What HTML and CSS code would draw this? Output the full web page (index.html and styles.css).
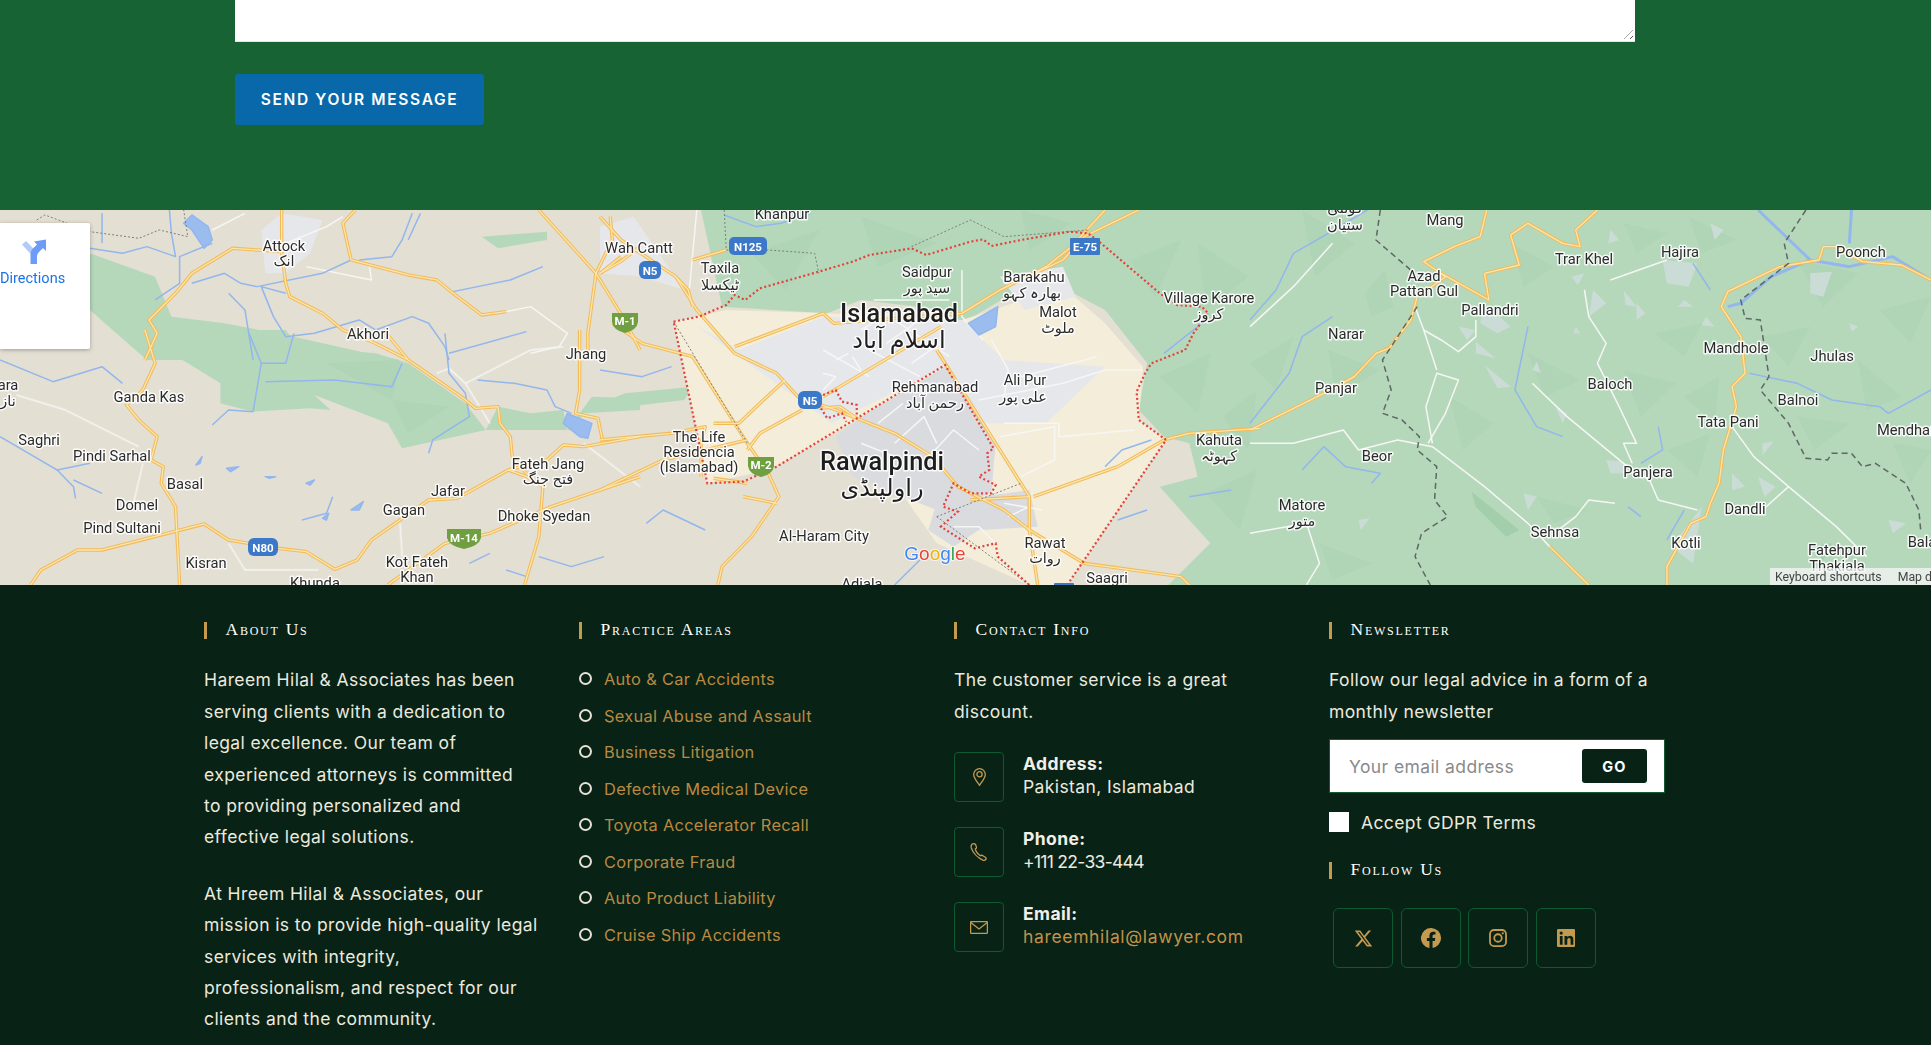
FILE: index.html
```html
<!DOCTYPE html>
<html lang="en">
<head>
<meta charset="utf-8">
<title>Contact</title>
<link rel="stylesheet" href="styles.css">
</head>
<body>
<section class="contact">
  <div class="textarea"><span class="grip"></span></div>
  <button class="send">SEND YOUR MESSAGE</button>
</section>

<section class="map">
  <svg class="map-svg" viewBox="0 210 1931 375" width="1931" height="375" xmlns="http://www.w3.org/2000/svg">
    <defs>
      <g id="roads">
        <g transform="translate(0,0) scale(.4082,.3333)">
          <path d="M355 1080L385 1000L365 960L430 880L470 820L570 745L690 755L700 850L710 890L790 940L840 990L920 1030L1000 1080"/>
          <path d="M690 630L690 755"/>
          <path d="M870 630L840 670L860 780L1000 825L1070 840L1110 880L1180 945L1240 935"/>
          <path d="M1320 630L1460 820L1530 960L1568 1050"/>
          <path d="M1495 650L1500 720L1460 820L1440 1000L1440 1080"/>
          <path d="M1568 740L1520 785L1470 820"/>
        </g>
        <g transform="translate(0,330) scale(.4082,.3333)">
          <path d="M355 0L380 100L350 180L310 225L340 270L385 320L370 390L400 410L395 460L430 530L440 765"/>
          <path d="M75 765L100 720L190 660L250 660L500 582L560 630L680 655L750 665L820 718L875 690L910 630L1050 510L1120 505L1245 420L1290 440L1330 470"/>
          <path d="M940 0L1000 90L1130 200L1165 235L1220 230L1225 280L1250 320L1255 380L1290 430"/>
          <path d="M1420 0L1420 180L1410 250L1465 265L1475 325"/>
          <path d="M1245 420L1340 390L1380 345L1430 350L1568 320"/>
          <path d="M1330 470L1320 620L1285 765"/>
          <path d="M950 765L1090 640L1200 610L1350 530L1568 440"/>
        </g>
        <g transform="translate(600,210) scale(.4209,.3333)">
          <path d="M0 20L50 90L180 200L230 300L320 430L420 490L470 560L560 600L700 670L790 740L850 830L960 900L1020 960L1150 1060L1380 1100L1400 1125"/>
          <path d="M30 340L100 400L220 440L350 700L400 790L425 860L360 980L290 1070L280 1125"/>
          <path d="M800 420L1020 860L1020 960L1040 1125"/>
          <path d="M320 410L530 310L555 340L860 310L950 240L1100 150L1150 80L1280 0"/>
          <path d="M530 560L810 350"/>
          <path d="M0 690L170 670L250 650L240 700L240 800"/>
          <path d="M0 840L150 750L350 690"/>
          <path d="M440 510L380 580L330 640L270 640"/>
          <path d="M480 600L380 670L350 720"/>
          <path d="M1030 860L1230 770L1340 690L1400 670L1568 655"/>
          <path d="M880 870L1020 860"/>
          <path d="M220 290L210 240L180 200M300 120L220 150M0 190L50 140"/>
          <path d="M520 595L570 590L610 625"/>
          <path d="M1200 0L1120 110L1060 170L950 240"/>
          <path d="M340 860L420 880"/>
          <path d="M270 805L350 820"/>
        </g>
        <g transform="translate(1250,210) scale(.4343,.3333)">
          <path d="M0 660L170 550L240 500L290 430L320 415L370 330L385 260L450 200L400 155L470 110L530 80L545 0"/>
          <path d="M440 190L550 270L540 190L620 165L600 75L640 40L720 100L760 110L750 60L800 0"/>
          <path d="M1568 210L1500 165L1410 155L1350 110L1320 110L1310 150L1220 170L1100 245L1085 290L1130 380L1140 490L1110 530L1120 590L1090 720L1080 820L1060 880L1050 920L1015 940L960 1070L960 1125"/>
          <path d="M690 1010L780 1125"/>
        </g>
      </g>
    </defs>

    <rect x="0" y="210" width="1931" height="375" class="land"/>

    <g class="forest">
      <g transform="translate(0,0) scale(.4082,.3333)">
        <path d="M220 760L380 830L420 950L550 970L720 1010L900 1060L980 1080L360 1080L285 1000L220 930Z"/>
        <path d="M1180 710L1340 695L1340 720L1220 745Z"/>
      </g>
      <g transform="translate(0,330) scale(.4082,.3333)">
        <path d="M285 0L380 40L540 160L540 220L620 245L760 235L810 240L770 195L950 280L985 355L1190 300L1220 230L1300 250L1380 240L1390 300L1450 200L1568 205L1568 240L1430 250L1400 300L1190 300L1140 220L1000 100L920 70L730 50L700 0Z"/>
      </g>
      <g transform="translate(600,210) scale(.4209,.3333)">
        <path d="M240 0L290 290L540 310L620 270L820 300L860 350L900 310L1050 200L1200 300L1300 460L1280 600L1340 680L1400 700L1420 800L1330 830L1400 930L1450 1000L1350 1125L1568 1125L1568 0Z"/>
        <path d="M0 580L0 600L200 570L220 530L60 550Z"/>
      </g>
      <rect x="1240" y="210" width="691" height="375"/>
    </g>

    <g class="shade">
      <g transform="translate(600,210) scale(.4209,.3333)">
        <path d="M360 130L520 60L440 240Z"/><path d="M620 20L800 100L660 170Z"/><path d="M1000 0L1120 40L1020 120Z"/>
        <path d="M1260 150L1380 90L1320 260Z"/><path d="M1420 100L1540 200L1440 300Z"/><path d="M1330 500L1450 430L1420 610Z"/>
        <path d="M1480 620L1560 540L1540 720Z"/><path d="M1440 850L1560 780L1520 960Z"/>
      </g>
      <g transform="translate(0,330) scale(.4082,.3333)">
        <path d="M800 100L980 90L960 210Z"/><path d="M960 210L1100 230L1000 310Z"/>
      </g>
      <g transform="translate(1250,210) scale(.4343,.3333)">
        <path d="M265 250L310 180L330 290L280 320Z"/><path d="M930 370L1040 340L1000 440Z"/><path d="M1260 150L1400 190L1320 290Z"/>
        <path d="M510 845L620 960L590 980L520 890Z" class="deep"/><path d="M1290 1010L1340 1000L1320 1050Z" class="deep"/>
        <path d="M120 0L240 100L150 200Z"/><path d="M640 430L760 510L680 560Z"/><path d="M1400 450L1500 560L1420 600Z"/>
        <path d="M0 460L100 380L60 540Z"/><path d="M180 420L300 480L200 560Z"/><path d="M460 560L560 640L490 720Z"/>
        <path d="M600 100L700 170L630 230Z"/><path d="M860 40L960 70L890 130Z"/><path d="M1010 20L1120 90L1040 130Z"/>
        <path d="M1180 380L1290 350L1240 470Z"/><path d="M860 480L980 520L900 620Z"/><path d="M1000 560L1080 500L1070 640Z"/>
        <path d="M960 720L1060 670L1030 800Z"/><path d="M1260 620L1380 640L1300 720Z"/><path d="M1450 300L1568 260L1520 400Z"/>
        <path d="M1480 700L1568 720L1520 820Z"/><path d="M160 1000L280 1060L190 1110Z"/><path d="M660 860L780 900L700 940Z"/>
      </g>
    </g>

    <g class="urban-warm" transform="translate(600,210) scale(.4209,.3333)">
      <path d="M175 335L300 300L540 310L860 330L1100 230L1200 340L1290 470L1280 630L1345 690L1110 1125L1020 1125L800 1000L600 640L400 780L255 820Z"/>
    </g>
    <g class="urban-light" transform="translate(600,210) scale(.4209,.3333)">
      <path d="M220 340L330 420L530 320L860 330L960 450L1200 470L1060 640L900 640L820 470L550 640L440 540Z"/>
      <path d="M0 50L80 20L200 240L100 200L0 190Z"/>
      <path d="M950 200L1100 170L1130 260L1010 300Z"/>
    </g>
    <g class="urban-dark" transform="translate(600,210) scale(.4209,.3333)">
      <path d="M560 680L620 620L820 470L940 700L930 850L800 900L600 800Z"/>
      <path d="M800 880L1020 840L1040 950L900 960L840 1010L780 960Z"/>
    </g>
    <g class="urban-light">
      <path d="M640 690L690 640L790 660L760 760L700 820L650 820Z" transform="translate(0,0) scale(.4082,.3333)"/>
    </g>
    <g class="patch" transform="translate(1250,210) scale(.4343,.3333)">
      <path d="M740 200L770 190L755 225Z"/><path d="M790 240L820 280L780 320Z"/><path d="M860 240L890 290L865 285Z"/>
      <path d="M540 465L600 530L570 535Z"/><path d="M520 395L565 445L520 430Z"/><path d="M480 350L520 360L500 390Z"/>
      <path d="M540 280L600 350L570 370L530 340Z"/><path d="M705 595L730 610L720 640Z"/><path d="M820 750L860 755L870 790L830 790Z"/>
      <path d="M1050 320L1070 350L1040 345Z"/><path d="M950 150L1030 160L1010 230L960 220Z"/><path d="M1290 190L1340 185L1320 260L1290 250Z"/>
      <path d="M1110 790L1140 830L1110 840Z"/><path d="M1040 890L1020 1060L970 1010Z"/><path d="M1170 800L1210 830L1185 860Z"/>
      <path d="M890 280L910 310L890 330Z"/><path d="M1180 700L1205 695L1180 735Z"/><path d="M1380 340L1400 350L1385 365Z"/>
      <path d="M250 930L275 925L255 960Z"/><path d="M1470 930L1510 940L1480 970Z"/><path d="M660 860L640 900L630 850Z"/>
      <path d="M1060 40L1090 60L1070 90Z"/><path d="M830 60L850 90L825 100Z"/><path d="M660 455L670 490L650 480Z"/>
      <path d="M750 350L760 370L745 370Z"/><path d="M1000 270L1020 290L985 290Z"/>
    </g>

    <g class="minor">
      <g transform="translate(0,0) scale(.4082,.3333)">
        <path d="M520 690L600 640M700 730L800 680L840 650M750 800L910 840L905 800"/>
        <path d="M1240 935L1300 920L1390 1000L1370 1040L1300 1060"/>
      </g>
      <g transform="translate(0,330) scale(.4082,.3333)">
        <path d="M40 195L160 240L340 350M350 400L325 530M560 640L600 720L780 720M980 580L985 680"/>
        <path d="M1070 130L1100 115L1140 160L1300 60L1380 50M1140 160L1200 280"/>
        <path d="M1430 340L1568 470"/>
      </g>
      <g transform="translate(600,210) scale(.4209,.3333)">
        <path d="M230 0L210 270"/>
        <path d="M900 570L1100 520L1200 480L1290 480M960 640L1090 640L1090 680L1270 660"/>
        <path d="M930 390L970 480L960 560M860 180L860 320L910 390"/>
        <path d="M650 270L830 270M700 330L830 440M640 420L760 500M620 360L700 300M680 400L760 330M740 460L820 390"/>
        <path d="M530 490L560 500L530 540M600 440L620 480M530 420L640 500M560 450L590 430"/>
        <path d="M950 680L1080 650L1080 750L1000 800"/>
        <path d="M840 950L900 950L940 1000M960 880L1050 900M970 920L1020 890M1000 500L1180 440"/>
        <path d="M660 640L720 580M700 700L770 620L800 700M760 770L840 660L900 720M620 700L700 740"/>
      </g>
      <g transform="translate(1250,210) scale(.4343,.3333)">
        <path d="M0 700L100 700L215 660L250 720L340 690L420 710L540 830L640 940L690 1010"/>
        <path d="M420 700L405 590L430 490L480 510L450 610L410 700M400 360L430 480"/>
        <path d="M650 520L730 620L860 760L920 810L940 870L1030 900"/>
        <path d="M770 240L780 320L820 400L800 460L850 590L890 700L860 700L880 760"/>
        <path d="M1110 650L1160 740L1240 830L1350 950L1420 1040"/>
        <path d="M0 350L100 230L190 100M840 880L780 870L750 920L700 970M1240 830L1180 900"/>
        <path d="M520 330L520 380L480 425L440 390L400 360L380 290"/>
        <path d="M0 970L130 940L160 1060L130 1125"/>
        <path d="M830 210L960 150"/>
      </g>
    </g>

    <g class="water">
      <g transform="translate(0,0) scale(.4082,.3333)">
        <path d="M450 670L470 645L510 680L520 720L500 745L470 690Z" class="lake"/>
        <path d="M220 745L300 760L360 740L430 770L420 700L415 630M520 730L440 770L440 850L380 900"/>
        <path d="M700 880L640 860L670 950L700 1010L770 1000L880 960L920 990L1010 950L1050 970L1090 1040L1100 1080"/>
        <path d="M470 850L550 820L590 850L630 860L790 820L860 780M560 880L600 930L620 1080"/>
        <path d="M880 780L960 770L985 720L1010 640M1110 875L1250 840L1330 800M1100 1060L1290 995"/>
        <path d="M250 640L250 730M1030 640L1000 720"/>
      </g>
      <g transform="translate(0,330) scale(.4082,.3333)">
        <path d="M0 90L130 155L250 110L300 160M0 320L140 420L220 400M140 420L180 470L185 505M180 450L250 490"/>
        <path d="M620 245L640 100L610 10M640 100L700 100L720 10M650 155L820 150L960 170L985 100"/>
        <path d="M1090 10L1100 130L1140 190L1150 260L1060 330L1050 370M1170 150L1260 160L1340 180L1360 230L1400 250"/>
        <path d="M520 285L560 240L620 245M740 570L800 550L815 500"/>
        <path d="M1390 250L1450 280L1440 325L1420 320L1380 280Z" class="lake"/>
        <path d="M480 405L495 380L490 400Z M555 415L585 410L565 425Z M650 440L675 440L660 445Z M750 460L770 450L760 465Z M790 565L805 550L800 570Z M860 540L890 515L880 540Z" class="lake"/>
        <path d="M1240 720L1290 740M1150 700L1200 670M1320 680L1400 710L1480 680"/>
      </g>
      <g transform="translate(600,210) scale(.4209,.3333)">
        <path d="M295 15L370 50L430 40L500 10"/>
        <path d="M875 340L945 290L940 350L900 375Z" class="lake"/>
        <path d="M1200 770L1240 720L1310 690M1340 430L1420 350L1445 310"/>
        <path d="M0 480L100 500L170 470M250 960L150 900L110 940M700 1125L760 1050"/>
        <path d="M1400 860L1500 840M1300 900L1230 930"/>
      </g>
      <g transform="translate(1250,210) scale(.4343,.3333)">
        <path d="M1170 0L1290 150L1380 170L1480 140L1568 210M1100 290L1130 280L1200 200L1290 150M1385 0L1380 100" class="thick"/>
        <path d="M640 350L610 540L660 650L720 680M170 710L220 770L300 790L280 820"/>
        <path d="M1150 490L1260 520L1340 570L1450 590L1470 610L1568 540M1020 160L1060 240"/>
        <path d="M0 330L60 240L100 130L180 70L270 0M0 640L90 490L120 380L190 320"/>
        <path d="M120 780L170 710M940 650L950 720L900 760"/>
        <path d="M870 890L900 920M960 990L1000 900"/>
      </g>
    </g>

    <use href="#roads" class="road-o"/>
    <use href="#roads" class="road-i"/>

    <g class="border-grey">
      <g transform="translate(0,0) scale(.4082,.3333)"><path d="M90 660L110 645L220 695L340 715L390 690L460 710L450 630"/></g>
      <g transform="translate(600,210) scale(.4209,.3333)">
        <path d="M295 0L300 120L400 120L510 130L520 190M740 110L880 30L960 80L1160 60"/>
        <path d="M175 335L230 450L350 700M800 920L1000 820M800 920L1020 1125"/>
      </g>
    </g>
    <g class="border-dash" transform="translate(1250,210) scale(.4343,.3333)">
      <path d="M300 0L290 90L370 180M385 290L305 450L325 540L305 610L350 630L390 680L385 720L430 770L425 870L455 920L395 970L380 1040L415 1125"/>
      <path d="M1280 0L1230 100L1240 160L1130 270L1140 325L1175 330L1195 500L1175 540L1240 640L1280 745L1330 750L1340 730L1385 730L1410 770L1440 760L1510 820L1540 900L1545 970"/>
    </g>
    <g class="border-red" transform="translate(600,210) scale(.4209,.3333)">
      <path d="M175 335L235 320L300 285L320 255L345 270L380 235L520 185L600 155L640 135L740 115L775 135L880 95L910 88L930 108L1000 90L1115 65L1160 70L1200 110L1330 250L1370 285L1430 290L1445 310L1410 370L1390 420L1350 440L1310 460L1295 490L1275 545L1280 630L1345 690L1110 1125M1020 1125L945 1040L940 1000L890 1015L810 950L850 905L815 890L840 820L880 850L930 850L940 825L900 800L925 780L920 730L935 715L820 465L420 770L340 815L255 820L175 335"/>
      <path d="M530 555L560 540L575 575L610 585L610 620M525 595L540 625L575 610L585 635"/>
    </g>

    <g class="shields">
      <g class="blue">
        <rect x="639" y="261" width="22" height="18" rx="6"/><rect x="729" y="237" width="38" height="18" rx="5"/>
        <rect x="1070" y="238" width="30" height="17" rx="1"/><rect x="798" y="391" width="24" height="18" rx="6"/>
        <rect x="248" y="538" width="30" height="18" rx="6"/><rect x="1054" y="583" width="20" height="8" rx="1"/>
      </g>
      <g class="green">
        <path d="M612 313h26v9q-1 8-13 11q-12-3-13-11z"/><path d="M748 457h26v9q-1 8-13 11q-12-3-13-11z"/>
        <path d="M447 529h34v9q-2 8-17 11q-15-3-17-11z"/>
      </g>
      <g class="shield-text">
        <text x="650" y="275">N5</text><text x="748" y="251">N125</text><text x="1085" y="251">E-75</text>
        <text x="810" y="405">N5</text><text x="263" y="552">N80</text>
        <text x="625" y="325">M-1</text><text x="761" y="469">M-2</text><text x="464" y="542">M-14</text>
      </g>
    </g>

    <g class="labels">
      <text x="782" y="219">Khanpur</text><text x="284" y="251">Attock</text><text x="284" y="266" class="ur">انک</text>
      <text x="639" y="253">Wah Cantt</text><text x="720" y="273">Taxila</text><text x="720" y="290" class="ur">ٹیکسلا</text>
      <text x="927" y="277">Saidpur</text><text x="927" y="293" class="ur">سید پور</text>
      <text x="1034" y="282">Barakahu</text><text x="1032" y="298" class="ur">بھارہ کہو</text>
      <text x="1058" y="317">Malot</text><text x="1058" y="333" class="ur">ملوٹ</text>
      <text x="1209" y="303">Village Karore</text><text x="1209" y="319" class="ur">کروز</text>
      <text x="368" y="339">Akhori</text><text x="586" y="359">Jhang</text><text x="149" y="402">Ganda Kas</text>
      <text x="8" y="390">ara</text><text x="8" y="406" class="ur">ناز</text>
      <text x="39" y="445">Saghri</text><text x="112" y="461">Pindi Sarhal</text><text x="185" y="489">Basal</text>
      <text x="137" y="510">Domel</text><text x="122" y="533">Pind Sultani</text><text x="206" y="568">Kisran</text>
      <text x="315" y="588">Khunda</text><text x="417" y="567">Kot Fateh</text><text x="417" y="582">Khan</text>
      <text x="404" y="515">Gagan</text><text x="448" y="496">Jafar</text>
      <text x="548" y="469">Fateh Jang</text><text x="548" y="484" class="ur">فتح جنگ</text><text x="544" y="521">Dhoke Syedan</text>
      <text x="699" y="442">The Life</text><text x="699" y="457">Residencia</text><text x="699" y="472">(Islamabad)</text>
      <text x="935" y="392">Rehmanabad</text><text x="935" y="408" class="ur">رحمن آباد</text>
      <text x="1025" y="385">Ali Pur</text><text x="1023" y="402" class="ur">علی پور</text>
      <text x="824" y="541">Al-Haram City</text><text x="862" y="589">Adiala</text>
      <text x="1045" y="548">Rawat</text><text x="1045" y="563" class="ur">روات</text><text x="1107" y="583">Saagri</text>
      <text x="1219" y="445">Kahuta</text><text x="1219" y="461" class="ur">کہوٹہ</text>
      <text x="1336" y="393">Panjar</text><text x="1346" y="339">Narar</text><text x="1377" y="461">Beor</text>
      <text x="1302" y="510">Matore</text><text x="1302" y="526" class="ur">متور</text>
      <text x="1445" y="225">Mang</text><text x="1345" y="213" class="ur">کوٹلی</text><text x="1345" y="230" class="ur">ستیان</text>
      <text x="1424" y="281">Azad</text><text x="1424" y="296">Pattan Gul</text><text x="1490" y="315">Pallandri</text>
      <text x="1584" y="264">Trar Khel</text><text x="1680" y="257">Hajira</text><text x="1861" y="257">Poonch</text>
      <text x="1736" y="353">Mandhole</text><text x="1832" y="361">Jhulas</text><text x="1610" y="389">Baloch</text>
      <text x="1798" y="405">Balnoi</text><text x="1728" y="427">Tata Pani</text><text x="1906" y="435">Mendhar</text>
      <text x="1648" y="477">Panjera</text><text x="1745" y="514">Dandli</text><text x="1555" y="537">Sehnsa</text>
      <text x="1686" y="548">Kotli</text><text x="1837" y="555">Fatehpur</text><text x="1837" y="571">Thakiala</text><text x="1922" y="547">Bala</text>
      <text x="899" y="322" class="big">Islamabad</text><text x="899" y="348" class="big ur">اسلام آباد</text>
      <text x="882" y="470" class="big">Rawalpindi</text><text x="882" y="496" class="big ur">راولپنڈی</text>
    </g>
    <text x="935" y="560" class="google"><tspan class="g-b">G</tspan><tspan class="g-r">o</tspan><tspan class="g-y">o</tspan><tspan class="g-b">g</tspan><tspan class="g-g">l</tspan><tspan class="g-r">e</tspan></text>
  </svg>

  <div class="directions">
    <svg class="dir-icon" viewBox="0 0 24 25" width="24" height="25">
      <path class="dir-light" d="M0 5.500L4 2l10 10-1 5-3-.5z"/>
      <path class="dir-dark" d="M8.500 25V15q0-3 2-5l4.500-4.500-3-3L24 .5V12l-3-3-4 4q-2 2-2 4v8z"/>
    </svg>
    <span>Directions</span>
  </div>
  <div class="map-foot"><span>Keyboard shortcuts</span><span class="map-data">Map data</span></div>
</section>

<footer class="footer">
  <div class="col">
    <h3 class="heading">About Us</h3>
    <p class="body-text">Hareem Hilal &amp; Associates has been serving clients with a dedication to legal excellence. Our team of experienced attorneys is committed to&nbsp;providing personalized and effective legal solutions.</p>
    <p class="body-text second">At Hreem Hilal &amp; Associates, our mission is to provide high-quality legal services with integrity, professionalism, and respect for our clients and the community.</p>
  </div>
  <div class="col">
    <h3 class="heading">Practice Areas</h3>
    <ul class="areas">
      <li>Auto &amp; Car Accidents</li>
      <li>Sexual Abuse and Assault</li>
      <li>Business Litigation</li>
      <li>Defective Medical Device</li>
      <li>Toyota Accelerator Recall</li>
      <li>Corporate Fraud</li>
      <li>Auto Product Liability</li>
      <li>Cruise Ship Accidents</li>
    </ul>
  </div>
  <div class="col">
    <h3 class="heading">Contact Info</h3>
    <p class="body-text narrow">The customer service is a great discount.</p>
    <div class="contacts">
      <div class="contact-row">
        <span class="icon-box"><svg viewBox="0 0 13 18" width="13" height="18"><path d="M6.500 17.300C3.500 13 .7 10 .7 6.500a5.800 5.800 0 0 1 11.600 0c0 3.500-2.800 6.500-5.800 10.800z"/><circle cx="6.500" cy="6.300" r="2.600"/></svg></span>
        <div class="contact-text"><strong>Address:</strong><span>Pakistan, Islamabad</span></div>
      </div>
      <div class="contact-row">
        <span class="icon-box"><svg viewBox="0 0 18 18" width="18" height="18"><path d="M2 1.200q2-1.200 3.500.2l1 3q0 1-1.200 1.500q.5 3.500 5 6.800q1-.7 2-.3l3 1.800q1.400 1 .5 2.300q-1 1.200-3 .6C8 15 3 10 1.300 5q-.6-2.300.7-3.800z"/></svg></span>
        <div class="contact-text"><strong>Phone:</strong><span class="tight">+111 22-33-444</span></div>
      </div>
      <div class="contact-row">
        <span class="icon-box"><svg viewBox="0 0 18 13" width="18" height="13"><rect x=".6" y=".6" width="16.800" height="11.800" rx=".8"/><path d="M.8 1.500L9 8l8.200-6.500"/></svg></span>
        <div class="contact-text"><strong>Email:</strong><span class="gold">hareemhilal@lawyer.com</span></div>
      </div>
    </div>
  </div>
  <div class="col">
    <h3 class="heading">Newsletter</h3>
    <p class="body-text wide">Follow our legal advice in a form of a monthly newsletter</p>
    <div class="news-form">
      <span class="placeholder">Your email address</span>
      <button class="go">GO</button>
    </div>
    <label class="gdpr"><span class="check"></span>Accept GDPR Terms</label>
    <h3 class="heading follow">Follow Us</h3>
    <div class="social">
      <a class="soc"><svg viewBox="0 0 24 24" width="19" height="19"><path class="fill" d="M18.200 2h3.400l-7.400 8.500L23 22h-6.800l-5.300-7-6.100 7H1.400l7.900-9.100L1 2h7l4.800 6.400zM17 20h1.900L7 3.900H5z"/></svg></a>
      <a class="soc"><svg viewBox="0 0 24 24" width="22" height="22"><path class="fill" d="M23 12a11 11 0 1 0-12.700 10.900v-7.700H7.500V12h2.800V9.600c0-2.800 1.600-4.300 4.100-4.300 1.200 0 2.500.2 2.500.2v2.700h-1.400c-1.400 0-1.800.9-1.800 1.700V12h3l-.5 3.200h-2.500v7.700A11 11 0 0 0 23 12z"/></svg></a>
      <a class="soc"><svg viewBox="0 0 24 24" width="18" height="18"><rect x="1.300" y="1.300" width="21.400" height="21.400" rx="5.500" class="line"/><circle cx="12" cy="12" r="5" class="line"/><circle cx="18.300" cy="5.700" r="1.500" class="fill"/></svg></a>
      <a class="soc"><svg viewBox="0 0 24 24" width="18" height="18"><path class="fill" d="M1.500 0h21A1.500 1.500 0 0 1 24 1.500v21a1.500 1.500 0 0 1-1.500 1.500h-21A1.500 1.500 0 0 1 0 22.500v-21A1.500 1.500 0 0 1 1.500 0zm2.300 9.200V21h3.700V9.200zM5.600 3.300a2.100 2.100 0 1 0 0 4.300 2.100 2.100 0 0 0 0-4.300zm4.400 5.900V21h3.700v-6c0-1.900.7-3.100 2.400-3.100 1.400 0 2 1 2 3.100v6h3.700v-7.100c0-3.200-1.700-4.900-4.200-4.900-1.900 0-3.100 1-3.800 2.100V9.200z"/></svg></a>
    </div>
  </div>
</footer>
</body>
</html>
```
FILE: styles.css
```css
html, body { margin: 0; padding: 0; height: 1045px; overflow: hidden; background: #082215; }
body { font-family: "Inter", "Liberation Sans", sans-serif; font-size: 16px; color: #ece9df; }

.contact { height: 210px; box-sizing: border-box; background: #176334; padding: 0 0 0 235px; }
.textarea { position: relative; width: 1400px; height: 42px; background: #fff; border-bottom: 1px solid #e6e6e6; box-sizing: border-box; }
.grip { position: absolute; right: 2px; bottom: 2px; width: 9px; height: 9px; background: repeating-linear-gradient(135deg, transparent 0 2px, #555 2px 3px, transparent 3px 4px); clip-path: polygon(100% 0, 100% 100%, 0 100%); }
.send { display: block; margin-top: 32px; width: 249px; height: 51px; border: 0; border-radius: 3px; background: #0868a9; color: #fff; font-family: "Inter", sans-serif; font-weight: 600; font-size: 15.500px; letter-spacing: 1.650px; }

.map { position: relative; height: 375px; overflow: hidden; }
.map-svg { display: block; }
.map-svg path { vector-effect: non-scaling-stroke; }
.land { fill: #e3dfd2; }
.forest { fill: #b5d8bb; }
.urban-warm { fill: #f4edd9; }
.urban-light { fill: #e6e7eb; }
.urban-dark { fill: #d9dbdf; }
.shade { fill: #a9d0b1; opacity: .5; }
.shade .deep { fill: #8fc49c; }
.patch { fill: #cbdcd6; }
.minor path { fill: none; stroke: #f6f6f4; stroke-width: 1.500; stroke-linejoin: round; }
.water path { fill: none; stroke: #92b6ed; stroke-width: 1.500; stroke-linejoin: round; }
.water .thick { stroke-width: 3; }
.water .lake { fill: #9bbcef; }
.road-o { fill: none; stroke: #f2bb5a; stroke-width: 3.400; stroke-linejoin: round; }
.road-i { fill: none; stroke: #fce6ad; stroke-width: 1.300; stroke-linejoin: round; }
.border-grey path { fill: none; stroke: #7c8079; stroke-width: 1; stroke-dasharray: 2 2; }
.border-dash path { fill: none; stroke: #5f6763; stroke-width: 1.500; stroke-dasharray: 6 4; }
.border-red path { fill: none; stroke: #e4413b; stroke-width: 2.200; stroke-dasharray: 2 2.500; }
.blue { fill: #3c78c8; }
.green { fill: #6f9f40; }
.shield-text text { fill: #fff; font: 700 11.500px "Roboto", sans-serif; text-anchor: middle; }
.labels text { font: 400 14.700px "Roboto", "DejaVu Sans", sans-serif; fill: #2b2b2b; text-anchor: middle; stroke: #fff; stroke-width: 3px; stroke-opacity: .85; paint-order: stroke; stroke-linejoin: round; }
.labels .ur { font-size: 14.500px; }
.labels .big { font-size: 25.300px; font-weight: 500; fill: #1e1e1e; }
.labels .big.ur { font-size: 24px; font-weight: 400; }
.google { font: 400 19px "Liberation Sans", sans-serif; text-anchor: middle; stroke: #fff; stroke-width: 2px; stroke-opacity: .7; paint-order: stroke; }
.g-b { fill: #4285f4; } .g-r { fill: #e94335; } .g-y { fill: #e9b308; } .g-g { fill: #34a853; }

.directions { position: absolute; left: 0; top: 13px; width: 90px; height: 126px; background: #fff; border-radius: 0 2px 2px 0; box-shadow: 0 1px 4px rgba(0,0,0,.3); font: 400 14.500px "Roboto", sans-serif; color: #1a73e8; }
.directions span { position: absolute; left: 0; top: 47px; }
.dir-icon { position: absolute; left: 21.500px; top: 16px; }
.dir-light { fill: #b3cbfa; }
.dir-dark { fill: #6c9cf7; }
.map-foot { position: absolute; right: 0; bottom: 0; height: 17px; width: 161px; box-sizing: border-box; padding-left: 5px; display: flex; align-items: center; gap: 16px; overflow: hidden; white-space: nowrap; background: rgba(245,245,245,.75); font: 400 12.300px "Roboto", sans-serif; color: #444; }

.footer { display: grid; grid-template-columns: repeat(4, 375px); padding: 37px 0 0 204px; height: 460px; box-sizing: border-box; background: #082215; }
.heading { margin: 0 0 25.400px; height: 17px; padding-left: 18.500px; border-left: 3px solid #c49a4f; box-sizing: content-box; font: 400 17.500px/15px "Liberation Serif", serif; font-variant: small-caps; letter-spacing: 1.750px; color: #fff; }
.body-text { margin: 0; width: 335px; font-size: 17.500px; letter-spacing: .4px; line-height: 31.400px; }
.body-text.second { margin-top: 25px; }
.body-text.narrow { width: 300px; }
.areas { list-style: none; margin: -3px 0 0; padding: 0; }
.areas li { position: relative; height: 36.500px; line-height: 36.500px; padding-left: 25px; color: #b98a42; font-size: 16.400px; letter-spacing: .3px; }
.areas li::before { content: ""; position: absolute; left: 0; top: 11px; width: 9px; height: 9px; border: 2px solid #e6e2d5; border-radius: 50%; }

.contacts { display: flex; flex-direction: column; gap: 25px; margin-top: 25px; }
.contact-row { display: flex; gap: 19px; }
.icon-box { display: flex; flex: none; align-items: center; justify-content: center; width: 50px; height: 50px; box-sizing: border-box; border: 1px solid #0e5a30; border-radius: 4px; }
.icon-box svg { fill: none; stroke: #c49a4f; stroke-width: 1.300; }
.contact-text { display: flex; flex-direction: column; font-size: 17.500px; letter-spacing: .4px; line-height: 23px; }
.contact-text strong { font-weight: 700; color: #f1efe8; }
.tight { letter-spacing: -.7px; }
.gold { color: #c2934a; letter-spacing: .65px; }

.news-form { display: flex; align-items: center; justify-content: space-between; margin-top: 12px; width: 336px; height: 54px; box-sizing: border-box; padding: 0 17px 0 19px; background: #fff; border: 1px solid #125a31; }
.placeholder { color: #8a8a8a; font-size: 17.500px; letter-spacing: .4px; }
.go { width: 65px; height: 34px; border: 0; border-radius: 3px; background: #082215; color: #fff; font: 700 14.500px "Inter", sans-serif; letter-spacing: 1.200px; }
.gdpr { display: flex; align-items: center; gap: 12px; margin-top: 19px; height: 20px; font-size: 17.500px; letter-spacing: .4px; }
.check { width: 20px; height: 20px; background: #fff; }
.follow { margin: 30px 0 0; }
.social { display: flex; gap: 7.500px; margin: 29px 0 0 4px; }
.soc { display: flex; align-items: center; justify-content: center; width: 60px; height: 60px; box-sizing: border-box; border: 1px solid #0e5a30; border-radius: 6px; }
.soc .fill { fill: #c49a4f; }
.soc .line { fill: none; stroke: #c49a4f; stroke-width: 2.400; }
```
